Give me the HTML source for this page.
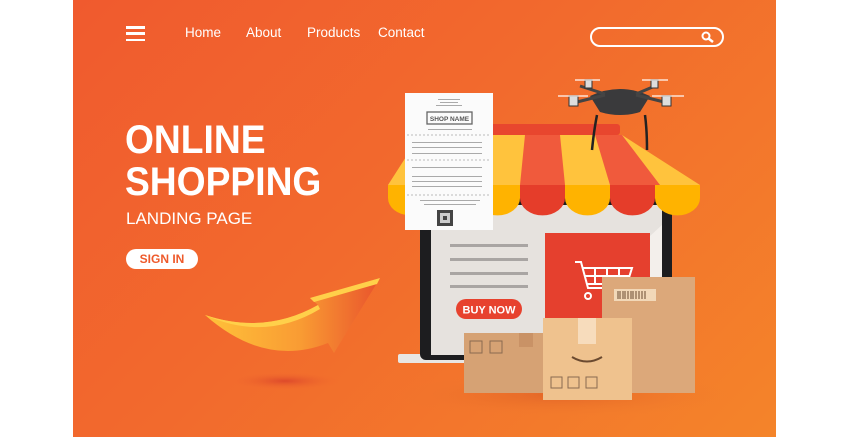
<!DOCTYPE html>
<html><head><meta charset="utf-8"><style>
*{margin:0;padding:0;box-sizing:border-box}
body{width:850px;height:437px;background:#fff;position:relative;overflow:hidden;font-family:"Liberation Sans",sans-serif}
#p{position:absolute;left:73px;top:0;width:703px;height:437px;background:linear-gradient(135deg,#f05a2e 0%,#f26a2d 45%,#f4842a 100%);overflow:hidden}
.a{position:absolute}
.nav{color:#fff;font-size:13.5px;top:25px}
</style></head><body>
<div id="p"></div>
<div class="a" style="left:126px;top:26px;width:19px;height:15px">
<div style="height:2.5px;background:#fff;margin-bottom:3.8px"></div><div style="height:2.5px;background:#fff;margin-bottom:3.8px"></div><div style="height:2.5px;background:#fff"></div></div>
<div class="a nav" style="left:185px">Home</div>
<div class="a nav" style="left:246px">About</div>
<div class="a nav" style="left:307px">Products</div>
<div class="a nav" style="left:378px">Contact</div>
<div class="a" style="left:590px;top:27px;width:134px;height:20px;border:2px solid #fff;border-radius:10px"></div>
<svg class="a" style="left:700px;top:30px" width="16" height="14"><circle cx="6" cy="6" r="3.5" fill="none" stroke="#fff" stroke-width="2"/><line x1="8.5" y1="8.5" x2="13" y2="12" stroke="#fff" stroke-width="2.5"/></svg>
<div class="a" style="left:125px;top:119px;color:#fff;font-weight:bold;font-size:40px;line-height:42px;transform:scaleX(0.93);transform-origin:0 0">ONLINE<br>SHOPPING</div>
<div class="a" style="left:126px;top:209px;color:#fff;font-size:17px">LANDING PAGE</div>
<div class="a" style="left:126px;top:249px;width:72px;height:20px;background:#fff;border-radius:10px;color:#ee5a2b;font-weight:bold;font-size:12px;text-align:center;line-height:20px">SIGN IN</div>
<svg class="a" style="left:0;top:0" width="850" height="437">
<defs>
<linearGradient id="ag" x1="0" x2="1"><stop offset="0" stop-color="#ffc23a"/><stop offset="0.55" stop-color="#f99b33"/><stop offset="1" stop-color="#e9532c"/></linearGradient>
<radialGradient id="sh"><stop offset="0" stop-color="#d8402a" stop-opacity=".8"/><stop offset="1" stop-color="#f06a2d" stop-opacity="0"/></radialGradient>
<radialGradient id="sh2"><stop offset="0" stop-color="#d85a25" stop-opacity=".6"/><stop offset="1" stop-color="#f07a2d" stop-opacity="0"/></radialGradient>
</defs>
<ellipse cx="285" cy="381" rx="55" ry="9" fill="url(#sh)"/>
<ellipse cx="560" cy="395" rx="170" ry="22" fill="url(#sh2)"/>
<path d="M205 315 Q265 335 318 305 L310 298 L380 278 L334 353 L328 343 Q265 368 205 315Z" fill="url(#ag)"/>
<path d="M205 315 Q265 335 318 305 L320 309 Q265 342 205 315Z" fill="#ffd04a"/>
<path d="M310 298 L380 278 L377 284 L314 302Z" fill="#ffd04a"/>
<!-- laptop -->
<rect x="398" y="354" width="75" height="9" rx="2" fill="#e8e6e3"/>
<rect x="420" y="195" width="252" height="165" rx="6" fill="#1d1d1f"/>
<rect x="431" y="205" width="231" height="150" fill="#e6e2de"/>
<polygon points="520,355 662,225 662,355" fill="#f3efeb"/>
<rect x="450" y="244" width="78" height="3" fill="#a9a5a3"/>
<rect x="450" y="258" width="78" height="3" fill="#a9a5a3"/>
<rect x="450" y="272" width="78" height="3" fill="#a9a5a3"/>
<rect x="450" y="285" width="78" height="3" fill="#a9a5a3"/>
<rect x="456" y="299" width="66" height="20" rx="10" fill="#e7422e"/>
<text x="489" y="313.5" font-size="11" font-weight="bold" fill="#fff" text-anchor="middle" font-family="Liberation Sans">BUY NOW</text>
<rect x="545" y="233" width="105" height="88" fill="#e5402e"/>
<g fill="none" stroke="#fff" stroke-width="2"><path d="M575 262 L581 262 L588 288 L628 288 M583 268 L632 268 L627 284 L587 284 M595 268 V284 M607 268 V284 M619 268 V284 M585 276 H630"/><circle cx="588" cy="296" r="3"/></g>
<!-- awning -->
<rect x="490" y="124" width="130" height="11" rx="3" fill="#e8462e"/>
<polygon points="420,135 622,135 700,185 388,185" fill="#ffc33d"/>
<polygon points="455,135 490,135 475,185 425,185" fill="#f05a3c"/>
<polygon points="525,135 560,135 565,185 520,185" fill="#f05a3c"/>
<polygon points="595,135 622,135 660,185 610,185" fill="#f05a3c"/>
<g><path d="M388 185 H430 V198 A21 17 0 0 1 388 198Z" fill="#ffb300"/>
<path d="M430 185 H475 V198 A22 17 0 0 1 430 198Z" fill="#e53d2a"/>
<path d="M475 185 H520 V198 A22 17 0 0 1 475 198Z" fill="#ffb300"/>
<path d="M520 185 H565 V198 A22 17 0 0 1 520 198Z" fill="#e53d2a"/>
<path d="M565 185 H610 V198 A22 17 0 0 1 565 198Z" fill="#ffb300"/>
<path d="M610 185 H655 V198 A22 17 0 0 1 610 198Z" fill="#e53d2a"/>
<path d="M655 185 H700 V198 A22 17 0 0 1 655 198Z" fill="#ffb300"/></g>
<!-- drone -->
<g stroke="#222" stroke-width="2.5" fill="none"><path d="M597 115 Q594 130 592 150"/><path d="M645 115 Q647 130 647 150"/></g>
<path d="M590 96 Q620 82 650 96 L640 112 Q620 118 600 112Z" fill="#3a3a3c"/>
<g stroke="#444" stroke-width="3"><line x1="573" y1="103" x2="605" y2="95"/><line x1="668" y1="103" x2="636" y2="95"/><line x1="580" y1="86" x2="605" y2="94"/><line x1="655" y1="86" x2="636" y2="94"/></g>
<g fill="#ddd" stroke="#333"><rect x="569" y="96" width="9" height="10"/><rect x="662" y="96" width="9" height="10"/><rect x="585" y="80" width="7" height="8"/><rect x="651" y="80" width="7" height="8"/></g>
<g stroke="#fff" stroke-opacity=".6" stroke-width="2"><line x1="558" y1="96" x2="588" y2="96"/><line x1="652" y1="96" x2="684" y2="96"/><line x1="575" y1="80" x2="600" y2="80"/><line x1="642" y1="80" x2="668" y2="80"/></g>
<!-- boxes -->
<rect x="602" y="277" width="93" height="116" fill="#dca87a"/>
<rect x="614" y="289" width="42" height="12" fill="#f2d8b8"/>
<g stroke="#6b4a30" stroke-width="1"><path d="M618 291v8M620 291v8M623 291v8M625 291v8M628 291v8M631 291v8M633 291v8M636 291v8M639 291v8M642 291v8M645 291v8"/></g>
<rect x="464" y="333" width="82" height="60" fill="#d6a274"/>
<rect x="519" y="333" width="14" height="14" fill="#c99266"/>
<rect x="543" y="318" width="89" height="82" fill="#efc28e"/>
<rect x="578" y="318" width="18" height="26" fill="#f7dcbc"/>
<path d="M572 357 Q587 366 602 357" stroke="#6b4a30" stroke-width="2" fill="none"/>
<g fill="none" stroke="#8a6a50" stroke-width="1"><rect x="470" y="341" width="12" height="12"/><rect x="490" y="341" width="12" height="12"/><rect x="551" y="377" width="11" height="11"/><rect x="568" y="377" width="11" height="11"/><rect x="586" y="377" width="11" height="11"/></g>
<!-- receipt -->
<rect x="405" y="93" width="88" height="137" fill="#fbfbfb"/>
<rect x="427" y="112" width="45" height="12" fill="none" stroke="#666" stroke-width="1.3"/>
<text x="449.5" y="121" font-size="6.5" font-weight="bold" fill="#555" text-anchor="middle" font-family="Liberation Sans">SHOP NAME</text>
<g fill="#aaa"><rect x="438" y="99" width="22" height="1"/><rect x="440" y="102" width="18" height="1"/><rect x="436" y="105" width="26" height="1"/><rect x="428" y="129" width="44" height="1"/>
<rect x="412" y="142" width="70" height="1"/><rect x="412" y="147" width="70" height="1"/><rect x="412" y="153" width="70" height="1"/><rect x="412" y="167" width="70" height="1"/><rect x="412" y="176" width="70" height="1"/><rect x="412" y="181" width="70" height="1"/><rect x="412" y="186" width="70" height="1"/><rect x="420" y="200" width="60" height="1"/><rect x="424" y="204" width="52" height="1"/></g>
<g stroke="#bbb" stroke-dasharray="2 2"><line x1="407" y1="135" x2="491" y2="135"/><line x1="407" y1="160" x2="491" y2="160"/><line x1="407" y1="195" x2="491" y2="195"/></g>
<rect x="437" y="210" width="16" height="16" fill="#444"/><rect x="440" y="213" width="10" height="10" fill="#ccc"/><rect x="443" y="216" width="4" height="4" fill="#444"/>
</svg>
</body></html>
